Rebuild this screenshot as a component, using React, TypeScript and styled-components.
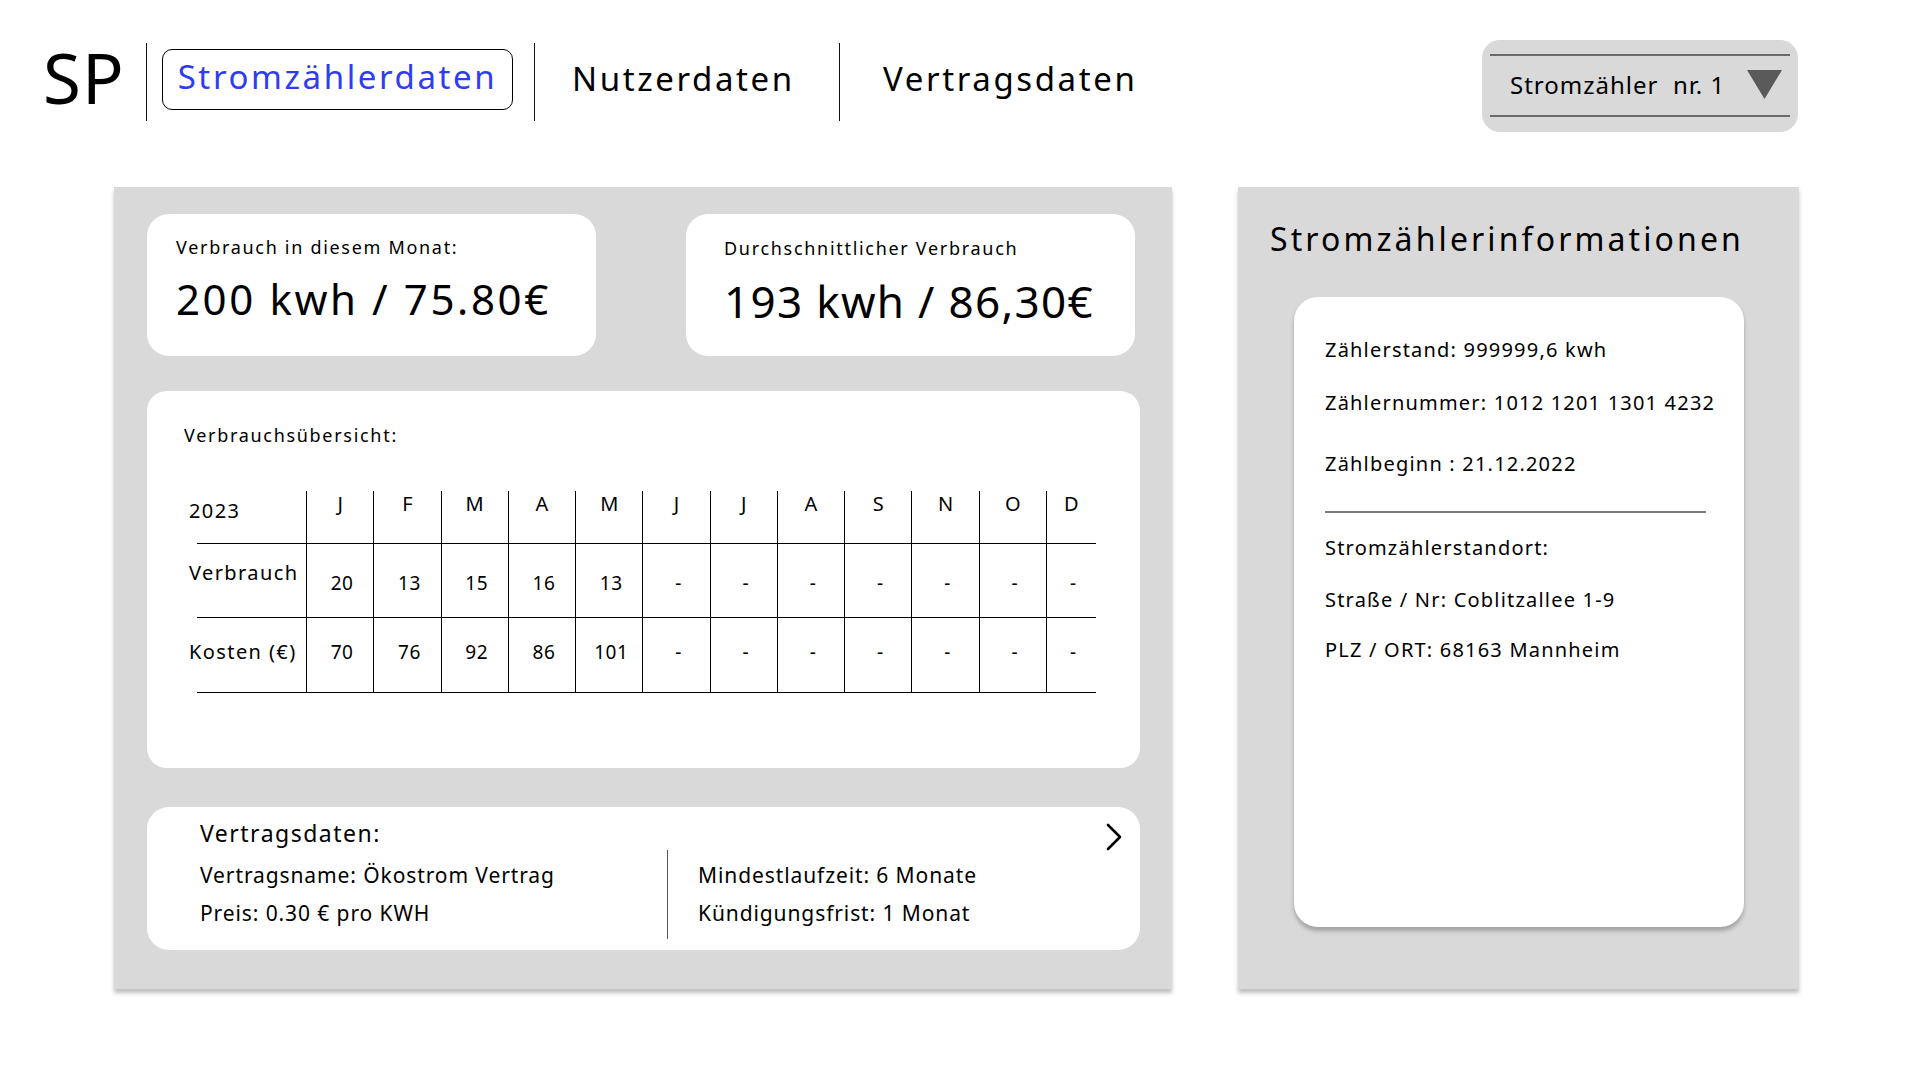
import React from 'react';
import styled, { createGlobalStyle } from 'styled-components';

const GlobalStyle = createGlobalStyle`
  html, body { margin: 0; padding: 0; background: #ffffff; }
  body { font-family: 'Noto Sans', 'DejaVu Sans', sans-serif; color: #000; }
  * { box-sizing: border-box; }
`;

const Page = styled.div`
  width: 1920px;
  height: 1080px;
  overflow: hidden;
`;

const Header = styled.header`
  display: flex;
  align-items: flex-start;
  height: 132px;
  padding: 40px 122px 0 0;
`;

const Nav = styled.nav`
  display: flex;
  align-items: stretch;
  height: 78px;
  margin-top: 3px;
`;

const Logo = styled.div`
  width: 146px;
  padding-left: 43px;
  font-size: 69px;
  line-height: 69px;
  margin-top: 0;
  letter-spacing: 1px;
`;

const VDivider = styled.div`
  width: 1px;
  background: #111;
`;

const ActiveTab = styled.div`
  align-self: flex-start;
  margin: 6px 21px 0 15px;
  width: 351px;
  height: 61px;
  border: 1px solid #000;
  border-radius: 10px;
  padding-top: 7px;
  text-align: center;
  color: #2f3cf2;
  font-size: 33px;
  line-height: 40px;
  letter-spacing: 2.6px;
`;

const NavLink = styled.div<{ $w?: number; $pl: number }>`
  align-self: flex-start;
  margin-top: 16px;
  ${(p) => (p.$w ? `width: ${p.$w}px;` : '')}
  padding-left: ${(p) => p.$pl}px;
  font-size: 33px;
  line-height: 40px;
  letter-spacing: 2.6px;
`;

const Dropdown = styled.div`
  margin-left: auto;
  width: 316px;
  height: 92px;
  background: #d9d9d9;
  border-radius: 18px;
  padding: 14px 8px 0;
`;

const DropdownInner = styled.div`
  height: 63px;
  border-top: 2px solid #6b6b6b;
  border-bottom: 2px solid #6b6b6b;
  display: flex;
  align-items: center;
  justify-content: space-between;
  padding: 0 8px 2px 20px;
`;

const DropdownText = styled.span`
  font-size: 24px;
  letter-spacing: 1px;
  white-space: pre;
`;

const Main = styled.main`
  display: flex;
  gap: 66px;
  padding-left: 114px;
  margin-top: 55px;
`;

const LeftPanel = styled.section`
  width: 1058px;
  height: 802px;
  background: #d9d9d9;
  box-shadow: 0 4px 4px rgba(0, 0, 0, 0.25);
  padding: 27px 32px 0 33px;
  display: flex;
  flex-direction: column;
`;

const TopRow = styled.div`
  display: grid;
  grid-template-columns: 449px 449px;
  column-gap: 90px;
`;

const StatCard = styled.div<{ $pl: number; $pt: number }>`
  height: 142px;
  background: #fff;
  border-radius: 22px;
  padding: ${(p) => p.$pt}px 0 0 ${(p) => p.$pl}px;
`;

const StatLabel = styled.div`
  font-size: 18px;
  line-height: 24px;
  letter-spacing: 1.7px;
`;

const StatValue = styled.div<{ $size: number; $ls: number; $mt: number }>`
  margin-top: ${(p) => p.$mt}px;
  font-size: ${(p) => p.$size}px;
  line-height: ${(p) => p.$size + 8}px;
  letter-spacing: ${(p) => p.$ls}px;
  white-space: nowrap;
`;

const TableCard = styled.div`
  margin-top: 35px;
  height: 377px;
  background: #fff;
  border-radius: 20px;
  padding: 32px 0 0 37px;
`;

const CardTitle = styled.div`
  font-size: 18px;
  line-height: 24px;
  letter-spacing: 1.7px;
`;

const UsageGrid = styled.div`
  margin: 44px 0 0 13px;
  display: grid;
  grid-template-columns: 109px repeat(11, 67.27px) 50px;
  grid-template-rows: 53px 74px 75px;
`;

const RowLabel = styled.div<{ $pt: number }>`
  border-bottom: 1px solid #000;
  padding-top: ${(p) => p.$pt}px;
  text-indent: -8px;
  font-size: 20px;
  line-height: 24px;
  letter-spacing: 1.4px;
  white-space: nowrap;
`;

const MonthCell = styled.div`
  border-left: 1px solid #000;
  border-bottom: 1px solid #000;
  padding-top: 1px;
  text-align: center;
  font-size: 20px;
  line-height: 24px;
`;

const ValueCell = styled.div<{ $pt: number }>`
  border-left: 1px solid #000;
  border-bottom: 1px solid #000;
  padding: ${(p) => p.$pt}px 0 0 4px;
  text-align: center;
  font-size: 19px;
  line-height: 24px;
  letter-spacing: 0.5px;
`;

const ContractCard = styled.div`
  position: relative;
  margin-top: 39px;
  height: 143px;
  background: #fff;
  border-radius: 22px;
  padding: 12px 0 0 53px;
`;

const ContractTitle = styled.div`
  font-size: 23px;
  line-height: 28px;
  letter-spacing: 1.5px;
`;

const ContractRow = styled.div`
  display: flex;
  align-items: flex-start;
  margin-top: 3px;
`;

const ContractCol = styled.div<{ $w?: number; $pl?: number }>`
  ${(p) => (p.$w ? `width: ${p.$w}px;` : '')}
  padding: 6px 0 0 ${(p) => p.$pl ?? 0}px;
  font-size: 21px;
  line-height: 38px;
  letter-spacing: 0.9px;
  white-space: nowrap;
`;

const ContractDivider = styled.div`
  width: 1px;
  height: 89px;
  background: #555;
`;

const ChevronButton = styled.button`
  position: absolute;
  top: 16px;
  right: 18px;
  padding: 0;
  border: 0;
  background: none;
  width: 16px;
  height: 28px;
  display: flex;
`;

const RightPanel = styled.section`
  width: 561px;
  height: 802px;
  background: #d9d9d9;
  box-shadow: 0 4px 4px rgba(0, 0, 0, 0.25);
  padding: 32px 0 0 32px;
`;

const PanelTitle = styled.h2`
  margin: 0;
  font-weight: 400;
  font-size: 32px;
  line-height: 40px;
  letter-spacing: 3.1px;
`;

const InfoCard = styled.div`
  margin: 38px 0 0 24px;
  width: 450px;
  height: 630px;
  background: #fff;
  border-radius: 24px;
  box-shadow: 0 4px 4px rgba(0, 0, 0, 0.25);
  padding: 41px 0 0 31px;
`;

const InfoLine = styled.div<{ $mt: number }>`
  margin-top: ${(p) => p.$mt}px;
  font-size: 20px;
  line-height: 24px;
  letter-spacing: 1.2px;
  white-space: nowrap;
`;

const InfoRule = styled.div`
  margin-top: 35px;
  width: 381px;
  height: 2px;
  background: #7a7a7a;
`;

const months = ['J', 'F', 'M', 'A', 'M', 'J', 'J', 'A', 'S', 'N', 'O', 'D'];
const usage = ['20', '13', '15', '16', '13', '-', '-', '-', '-', '-', '-', '-'];
const costs = ['70', '76', '92', '86', '101', '-', '-', '-', '-', '-', '-', '-'];

export default function App() {
  return (
    <Page>
      <GlobalStyle />
      <Header>
        <Nav>
          <Logo>SP</Logo>
          <VDivider />
          <ActiveTab>Stromzählerdaten</ActiveTab>
          <VDivider />
          <NavLink $w={304} $pl={37}>Nutzerdaten</NavLink>
          <VDivider />
          <NavLink $pl={43}>Vertragsdaten</NavLink>
        </Nav>
        <Dropdown>
          <DropdownInner>
            <DropdownText>{'Stromzähler  nr. 1'}</DropdownText>
            <svg width="35" height="29" viewBox="0 0 35 29">
              <polygon points="0,0 35,0 17.5,29" fill="#5a5a5a" />
            </svg>
          </DropdownInner>
        </Dropdown>
      </Header>

      <Main>
        <LeftPanel>
          <TopRow>
            <StatCard $pl={29} $pt={21}>
              <StatLabel>Verbrauch in diesem Monat:</StatLabel>
              <StatValue $size={42} $ls={2.6} $mt={15}>200 kwh / 75.80€</StatValue>
            </StatCard>
            <StatCard $pl={38} $pt={22}>
              <StatLabel>Durchschnittlicher Verbrauch</StatLabel>
              <StatValue $size={44} $ls={1.3} $mt={15}>193 kwh / 86,30€</StatValue>
            </StatCard>
          </TopRow>

          <TableCard>
            <CardTitle>Verbrauchsübersicht:</CardTitle>
            <UsageGrid>
              <RowLabel $pt={8}>2023</RowLabel>
              {months.map((m, i) => (
                <MonthCell key={'m' + i}>{m}</MonthCell>
              ))}
              <RowLabel $pt={17}>Verbrauch</RowLabel>
              {usage.map((v, i) => (
                <ValueCell key={'u' + i} $pt={27}>{v}</ValueCell>
              ))}
              <RowLabel $pt={22}>Kosten (€)</RowLabel>
              {costs.map((v, i) => (
                <ValueCell key={'c' + i} $pt={22}>{v}</ValueCell>
              ))}
            </UsageGrid>
          </TableCard>

          <ContractCard>
            <ContractTitle>Vertragsdaten:</ContractTitle>
            <ContractRow>
              <ContractCol $w={467}>
                <div>Vertragsname: Ökostrom Vertrag</div>
                <div>Preis: 0.30 € pro KWH</div>
              </ContractCol>
              <ContractDivider />
              <ContractCol $pl={30}>
                <div>Mindestlaufzeit: 6 Monate</div>
                <div>Kündigungsfrist: 1 Monat</div>
              </ContractCol>
            </ContractRow>
            <ChevronButton aria-label="Vertragsdaten öffnen">
              <svg width="16" height="28" viewBox="0 0 16 28">
                <polyline points="2,2 14,14 2,26" fill="none" stroke="#000" strokeWidth="2.6" strokeLinecap="round" strokeLinejoin="round" />
              </svg>
            </ChevronButton>
          </ContractCard>
        </LeftPanel>

        <RightPanel>
          <PanelTitle>Stromzählerinformationen</PanelTitle>
          <InfoCard>
            <InfoLine $mt={0}>Zählerstand: 999999,6 kwh</InfoLine>
            <InfoLine $mt={29}>Zählernummer: 1012 1201 1301 4232</InfoLine>
            <InfoLine $mt={37}>Zählbeginn : 21.12.2022</InfoLine>
            <InfoRule />
            <InfoLine $mt={23}>Stromzählerstandort:</InfoLine>
            <InfoLine $mt={28}>Straße / Nr: Coblitzallee 1-9</InfoLine>
            <InfoLine $mt={26}>PLZ / ORT: 68163 Mannheim</InfoLine>
          </InfoCard>
        </RightPanel>
      </Main>
    </Page>
  );
}
